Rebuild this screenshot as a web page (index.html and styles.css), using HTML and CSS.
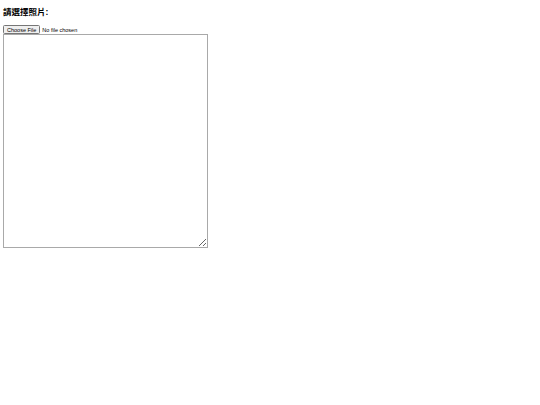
FILE: index.html
```html
<!DOCTYPE html>
<html lang="zh-Hant">
<head>
<meta charset="utf-8">
<title>請選擇照片</title>
<link rel="stylesheet" href="styles.css">
</head>
<body>
<div class="page">
  <div class="title">請選擇照片:</div>
  <input class="file" type="file">
  <textarea class="box"></textarea>
</div>
</body>
</html>
```
FILE: styles.css
```css
html, body {
  margin: 0;
  padding: 0;
  background: #ffffff;
}
.page {
  zoom: 0.5;
  padding: 14px 6px;
  font-family: "Liberation Sans", "Noto Sans CJK TC", sans-serif;
}
.title {
  margin: 0;
  font-size: 17px;
  line-height: 20px;
  font-weight: bold;
  color: #000;
}
.file {
  display: block;
  margin-top: 16px;
  font-family: "Liberation Sans", sans-serif;
  font-size: 11px;
}
.box {
  display: block;
  margin: 0;
  width: 410px;
  height: 427px;
  box-sizing: border-box;
  border: 1px solid #a9a9a9;
  resize: both;
}
```
